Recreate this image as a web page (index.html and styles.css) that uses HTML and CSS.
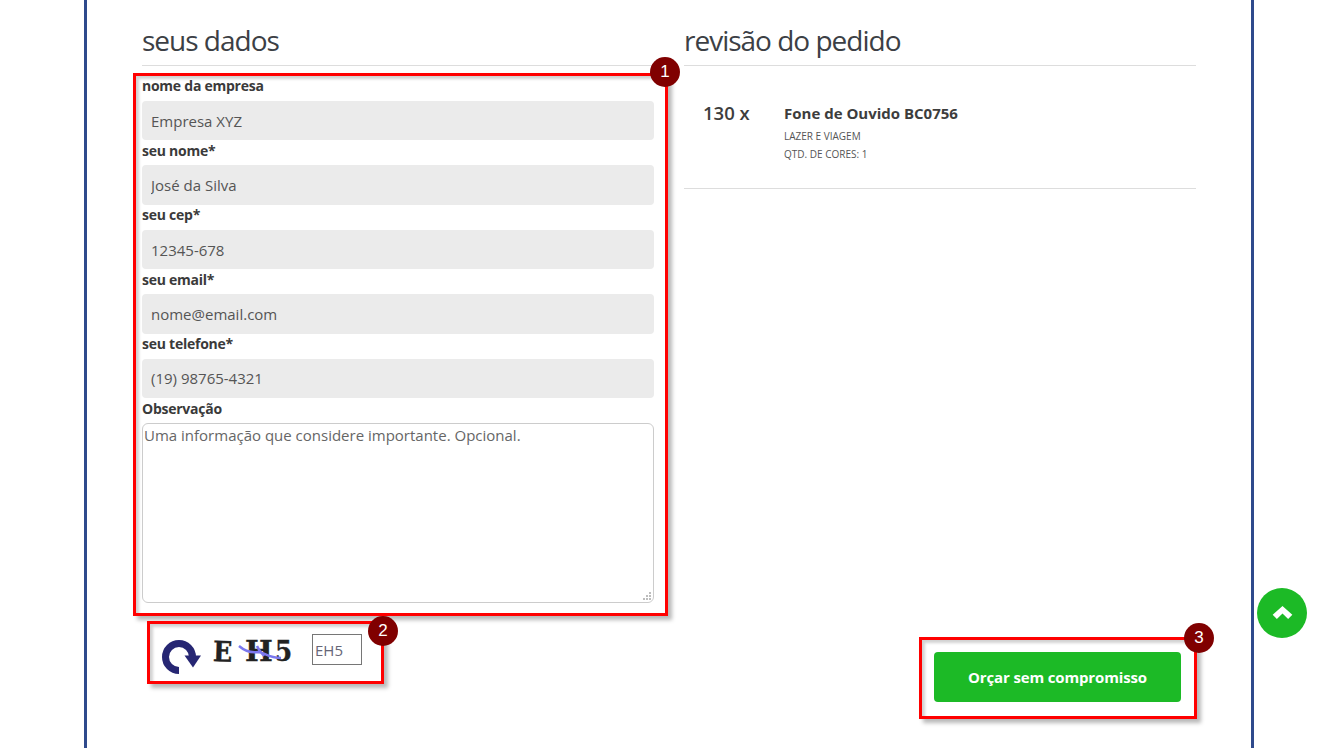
FILE: index.html
```html
<!DOCTYPE html>
<html lang="pt-BR">
<head>
<meta charset="utf-8">
<title>Revisão do pedido</title>
<link rel="stylesheet" href="styles.css">
</head>
<body>
<main class="page">
  <div class="columns">
    <section class="col">
      <h2 class="title">seus dados</h2>
      <form class="form">
        <label class="lbl">nome da empresa</label>
        <input class="field" value="Empresa XYZ">
        <label class="lbl">seu nome*</label>
        <input class="field" value="José da Silva">
        <label class="lbl">seu cep*</label>
        <input class="field" value="12345-678">
        <label class="lbl">seu email*</label>
        <input class="field" value="nome@email.com">
        <label class="lbl">seu telefone*</label>
        <input class="field" value="(19) 98765-4321">
        <label class="lbl">Observação</label>
        <div class="notes-wrap">
          <textarea class="notes" placeholder="Uma informação que considere importante. Opcional."></textarea>
          <svg class="grip" viewBox="0 0 8 8" aria-hidden="true">
            <path d="M6 0h2v2H6zM3 3h2v2H3zM6 3h2v2H6zM0 6h2v2H0zM3 6h2v2H3zM6 6h2v2H6z" fill="#bdbdbd"/>
          </svg>
        </div>
      </form>
    </section>
    <section class="col">
      <h2 class="title">revisão do pedido</h2>
      <div class="item">
        <div class="qty">130 x</div>
        <div class="info">
          <div class="name">Fone de Ouvido BC0756</div>
          <div class="meta">LAZER E VIAGEM</div>
          <div class="meta">QTD. DE CORES: 1</div>
        </div>
      </div>
    </section>
  </div>
  <div class="bottom">
    <div class="captcha">
      <svg class="refresh" viewBox="0 0 40 34" aria-hidden="true">
        <path d="M17 30.5 A13.5 13.5 0 1 1 30.5 17" fill="none" stroke="#262673" stroke-width="7"/>
        <path d="M22.5 15.5 H39 L31 27.5 Z" fill="#262673"/>
      </svg>
      <div class="code">
        <span class="c1">E</span><span class="c2">H</span><span class="c3">5</span>
        <svg class="scratch" viewBox="0 0 44 18" aria-hidden="true">
          <path d="M1 3 C8 9 14 10 20 9 C26 9 30 15 43 15 M19 3 C21 8 24 10 26 13" fill="none" stroke="#7b78ee" stroke-width="2.5"/>
        </svg>
      </div>
      <input class="code-input" value="EH5">
    </div>
    <button class="send" type="button">Orçar sem compromisso</button>
  </div>
</main>

<div class="mark m1"><span class="badge">1</span></div>
<div class="mark m2"><span class="badge">2</span></div>
<div class="mark m3"><span class="badge">3</span></div>

<a class="top" href="#" aria-label="Topo">
  <svg viewBox="0 0 22 16" width="23" height="15" aria-hidden="true"><path d="M11 1 L21.5 10.5 L17 15 L11 9 L5 15 L.5 10.5 Z" fill="#fff"/></svg>
</a>
</body>
</html>
```
FILE: styles.css
```css
* { box-sizing: border-box; }
html, body { margin: 0; height: 748px; overflow: hidden; background: #fff; }
body { font-family: "Open Sans", sans-serif; color: #3d3d3d; position: relative; }

.page {
  width: 1170px;
  height: 748px;
  margin-left: 84px;
  border-left: 3px solid #2f4a8c;
  border-right: 3px solid #2f4a8c;
  padding: 0 55px;
}
.columns { display: grid; grid-template-columns: 512px 512px; column-gap: 30px; }
.title {
  margin: 0;
  height: 66px;
  padding-top: 20px;
  font-size: 28px;
  line-height: 40px;
  font-weight: 400;
  letter-spacing: -1px;
  color: #3c3f45;
  border-bottom: 1px solid #ddd;
}
.form { display: flex; flex-direction: column; padding-top: 10px; }
.lbl {
  height: 25.05px;
  padding-top: .35px;
  font-size: 14px;
  line-height: 20px;
  font-weight: 700;
  letter-spacing: -.25px;
  color: #3a3a3a;
}
.field {
  height: 39.4px;
  width: 100%;
  padding: 0 9px;
  border: 0;
  border-radius: 4px;
  background: #ebebeb;
  font: 400 15px "Open Sans", sans-serif;
  color: #555;
}
.notes-wrap { position: relative; height: 180px; }
.notes {
  height: 180px;
  width: 100%;
  padding: 0 1px;
  display: block;
  resize: none;
  border: 1px solid #ccc;
  border-radius: 6px;
  font: 400 15px/22px "Open Sans", sans-serif;
  color: #555;
}
.notes::placeholder { color: #666; opacity: 1; }
.grip { position: absolute; right: 3px; bottom: 3px; width: 8px; height: 8px; }

.item {
  display: flex;
  height: 123px;
  padding: 35px 0 0 19px;
  border-bottom: 1px solid #ddd;
}
.qty { width: 81px; font-size: 18.5px; line-height: 24px; font-weight: 600; color: #3d3d3d; }
.name { font-size: 15px; line-height: 24px; font-weight: 700; margin-bottom: 2px; color: #3d3d3d; }
.meta { font-size: 10px; line-height: 18px; color: #555; }

.bottom {
  display: flex;
  justify-content: space-between;
  align-items: flex-start;
  padding: 31px 15px 0 20px;
}
.captcha { display: flex; align-items: flex-start; }
.refresh { width: 40px; height: 34px; margin-top: 6px; }
.code {
  position: relative;
  width: 79px;
  height: 34px;
  margin-left: 11px;
  display: flex;
  font: 700 28px/34px "DejaVu Serif", serif;
  -webkit-text-stroke: .4px #222;
  color: #222;
  margin-top: 1px;
}
.c1 { width: 20px; transform: scaleX(.9) rotate(2deg); transform-origin: left center; }
.c2 { width: 30px; margin-left: 12px; transform: scaleX(1.05); transform-origin: left center; }
.c3 { width: 17px; transform: scaleX(.88); transform-origin: left center; }
.scratch { position: absolute; left: 25px; top: 8px; width: 44px; height: 18px; }
.code-input {
  width: 50px;
  height: 31px;
  margin-left: 20px;
  padding: 0 2px;
  border: 1px solid #767676;
  font: 400 15px "Open Sans", sans-serif;
  color: #667;
}
.send {
  width: 247px;
  height: 50px;
  margin-top: 18px;
  border: 0;
  border-radius: 4px;
  background: #1cba26;
  color: #fff;
  font: 700 15px "Open Sans", sans-serif;
  letter-spacing: -.15px;
}

.mark {
  position: absolute;
  border: 3px solid #f00;
  box-shadow: 4px 4px 4px rgba(0,0,0,.28), inset 3px 3px 3px rgba(0,0,0,.18);
}
.m1 { left: 133px; top: 73px; width: 535px; height: 543px; }
.m2 { left: 147px; top: 621px; width: 237px; height: 63px; }
.m3 { left: 919px; top: 637px; width: 278px; height: 82px; }
.badge {
  position: absolute;
  width: 30px;
  height: 30px;
  border-radius: 50%;
  background: #800000;
  color: #fff;
  font: 400 17px/30px "Liberation Sans", sans-serif;
  text-align: center;
}
.m1 .badge { right: -15px; top: -19px; }
.m2 .badge { right: -17px; top: -8px; }
.m3 .badge { right: -20px; top: -17px; }
.top {
  position: absolute;
  left: 1257px;
  top: 588px;
  width: 50px;
  height: 50px;
  border-radius: 50%;
  background: #1cba26;
  display: flex;
  align-items: center;
  justify-content: center;
  padding-bottom: 2px;
}
```
